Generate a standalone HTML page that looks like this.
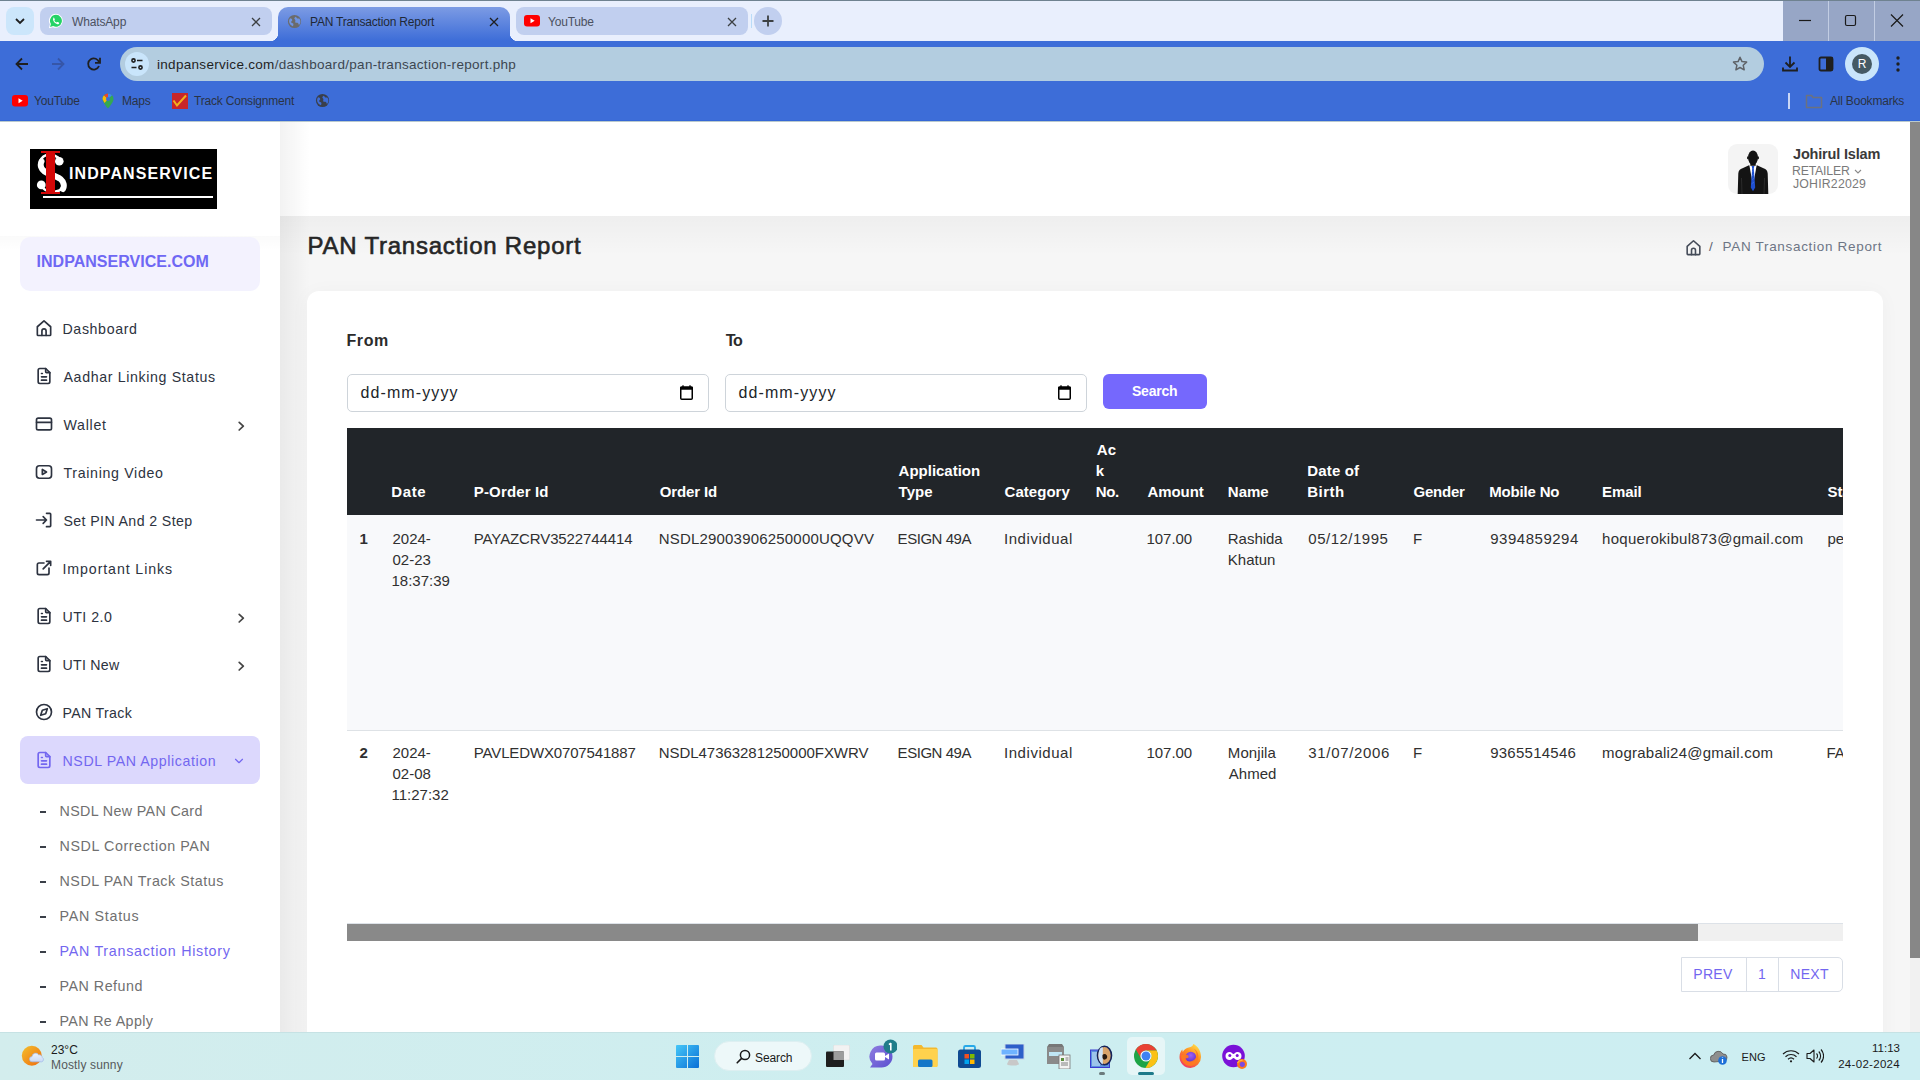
<!DOCTYPE html>
<html><head><meta charset="utf-8">
<style>
*{margin:0;padding:0;box-sizing:border-box}
html,body{width:1920px;height:1080px;overflow:hidden;background:#fff;font-family:"Liberation Sans",sans-serif}
.a{position:absolute}
.t{position:absolute;white-space:nowrap;line-height:1}
</style></head><body>
<!-- CHROME -->
<div class="a" style="left:0;top:0;width:1920px;height:41px;background:#e9effd"></div>
<div class="a" style="left:0;top:0;width:1920px;height:1px;background:#6f8290"></div>
<div class="a" style="left:1783px;top:1px;width:137px;height:40px;background:#97a6c6"></div>
<div class="a" style="left:1828px;top:1px;width:1px;height:40px;background:#c2cde3"></div>
<div class="a" style="left:1874px;top:1px;width:1px;height:40px;background:#c2cde3"></div>
<svg class="a" style="left:1783px;top:1px" width="137" height="40"><g stroke="#1a1a1a" stroke-width="1.2" fill="none"><path d="M16 19.5h12"/><rect x="62.5" y="14.5" width="10" height="10" rx="1.5"/><path d="M108 13.5l12 12M120 13.5l-12 12"/></g></svg>
<!-- tab dropdown -->
<div class="a" style="left:6px;top:7px;width:28px;height:28px;border-radius:8px;background:#cce6fb"></div>
<svg class="a" style="left:6px;top:7px" width="28" height="28"><path d="M10 12l4 4 4-4" stroke="#1f1f1f" stroke-width="1.8" fill="none"/></svg>
<!-- whatsapp tab -->
<div class="a" style="left:40px;top:7px;width:232px;height:28px;border-radius:8px;background:#c1cfef"></div>
<svg class="a" style="left:48px;top:13px" width="16" height="16" viewBox="0 0 16 16"><path d="M8 .8a7 7 0 0 0-6.1 10.5L.9 15.2l4-1a7 7 0 1 0 3.1-13.4z" fill="#fff"/><path d="M8 1.8a6 6 0 0 0-5.1 9.2l-.8 2.9 3-.8A6 6 0 1 0 8 1.8z" fill="#25d366"/><path d="M5.6 4.6c.3 0 .5.1.6.4l.6 1.3c.1.2 0 .4-.1.6l-.4.5c.4.9 1.2 1.7 2.2 2.2l.5-.5c.2-.2.4-.2.6-.1l1.3.6c.2.1.3.4.3.6-.2.9-.9 1.3-1.8 1.1-2.1-.6-3.6-2.1-4.3-4.2-.2-.9.2-1.9.5-2.5z" fill="#fff"/></svg>
<div class="t" style="left:72px;top:16px;font-size:12px;letter-spacing:-.15px;color:#4b5160">WhatsApp</div>
<svg class="a" style="left:251px;top:16.5px" width="10" height="10"><path d="M1 1l8 8M9 1l-8 8" stroke="#3c4043" stroke-width="1.3"/></svg>
<!-- active tab -->
<div class="a" style="left:278px;top:7px;width:232px;height:34px;border-radius:10px 10px 0 0;background:linear-gradient(#7c9be4,#3d6dd8)"></div>
<div class="a" style="left:270px;top:33px;width:8px;height:8px;background:radial-gradient(circle at 0 0,#e9effd 8px,#3d6dd8 8.5px)"></div>
<div class="a" style="left:510px;top:33px;width:8px;height:8px;background:radial-gradient(circle at 100% 0,#e9effd 8px,#3d6dd8 8.5px)"></div>
<svg class="a" style="left:287px;top:14px" width="15" height="15" viewBox="0 0 16 16"><circle cx="8" cy="8" r="7" fill="#6b6b6b"/><path d="M3.2 4.5c1.5.2 2.6 1 2.4 2.2-.2 1-1.5 1-1.2 2.2.3 1 1.7.6 2.3 1.6.4.8-.2 1.8-.4 2.5A5.6 5.6 0 0 1 3.2 4.5zM9.5 3c.8.5.6 1.5 1.5 1.8 1 .3 1.9-.3 2.5.6a5.6 5.6 0 0 1-.8 6.5c-.3-.9-.2-2-1.2-2.4-.9-.4-2 .3-2.6-.5-.5-.7.2-1.6 0-2.4C8.6 5.600 7.500 5.100 7.900 4.200 8.200 3.500 8.900 3.200 9.500 3z" fill="#6f94e2"/></svg>
<div class="t" style="left:310px;top:16px;font-size:12px;letter-spacing:-.2px;color:#1f2937">PAN Transaction Report</div>
<svg class="a" style="left:489px;top:16.5px" width="10" height="10"><path d="M1 1l8 8M9 1l-8 8" stroke="#1f1f1f" stroke-width="1.3"/></svg>
<!-- youtube tab -->
<div class="a" style="left:516px;top:7px;width:232px;height:28px;border-radius:8px;background:#c1cfef"></div>
<svg class="a" style="left:524px;top:15px" width="16" height="12"><rect x="0" y="0" width="16" height="11.5" rx="3" fill="#ff0000"/><path d="M6.5 3.3v5l4.2-2.5z" fill="#fff"/></svg>
<div class="t" style="left:548px;top:16px;font-size:12px;letter-spacing:-.2px;color:#4b5160">YouTube</div>
<svg class="a" style="left:727px;top:16.5px" width="10" height="10"><path d="M1 1l8 8M9 1l-8 8" stroke="#3c4043" stroke-width="1.3"/></svg>
<div class="a" style="left:751px;top:14px;width:1px;height:14px;background:#b9dcf8"></div>
<div class="a" style="left:754px;top:7px;width:28px;height:28px;border-radius:50%;background:#c1cfef"></div>
<svg class="a" style="left:754px;top:7px" width="28" height="28"><path d="M14 8.5v11M8.5 14h11" stroke="#3c4043" stroke-width="1.8"/></svg>
<!-- toolbar -->
<div class="a" style="left:0;top:41px;width:1920px;height:80px;background:#3d6dd8"></div>
<div class="a" style="left:0;top:120px;width:1920px;height:1px;background:#3467d6"></div>
<svg class="a" style="left:12px;top:54px" width="20" height="20"><path d="M16 10H4.5M10 4.5L4.5 10l5.5 5.5" stroke="#1f1f1f" stroke-width="1.8" fill="none"/></svg>
<svg class="a" style="left:48px;top:54px" width="20" height="20"><path d="M4 10h11.5M10 4.5l5.5 5.5-5.5 5.5" stroke="#3656a8" stroke-width="1.8" fill="none"/></svg>
<svg class="a" style="left:84px;top:54px" width="20" height="20"><path d="M15.2 8.5A5.6 5.6 0 1 0 15 12" stroke="#1f1f1f" stroke-width="1.8" fill="none"/><path d="M16 3.8v5h-5" stroke="#1f1f1f" stroke-width="1.8" fill="none"/></svg>
<div class="a" style="left:120px;top:47px;width:1644px;height:34px;border-radius:17px;background:#b3cde0"></div>
<div class="a" style="left:125px;top:52px;width:24px;height:24px;border-radius:50%;background:#c9e5fb"></div>
<svg class="a" style="left:125px;top:52px" width="24" height="24"><g stroke="#1f1f1f" stroke-width="1.6" fill="none"><circle cx="8.5" cy="8.5" r="1.6"/><path d="M12 8.5h5.5M6.5 15.5h5"/><circle cx="15.5" cy="15.5" r="1.6"/></g></svg>
<div class="t" style="left:157px;top:57.5px;font-size:13.5px;letter-spacing:.3px;color:#1f1f1f">indpanservice.com<span style="color:#3c4650">/dashboard/pan-transaction-report.php</span></div>
<svg class="a" style="left:1731px;top:55px" width="18" height="18" viewBox="0 0 18 18"><path d="M9 2.3l2 4.3 4.6.5-3.4 3.1 1 4.6L9 12.5l-4.1 2.3 1-4.6-3.4-3.1 4.6-.5z" stroke="#5f6368" stroke-width="1.5" fill="none" stroke-linejoin="round"/></svg>
<svg class="a" style="left:1780px;top:54px" width="20" height="20"><path d="M10 2.5v10M5.5 8.5l4.5 4.5 4.5-4.5M3 13.5v3h14v-3" stroke="#1f1f1f" stroke-width="1.8" fill="none"/></svg>
<svg class="a" style="left:1817px;top:55px" width="18" height="18"><rect x="2.5" y="2.5" width="13" height="13" rx="1.5" stroke="#1f1f1f" stroke-width="1.8" fill="none"/><rect x="9" y="2.5" width="6.5" height="13" fill="#1f1f1f"/></svg>
<div class="a" style="left:1845px;top:47px;width:34px;height:34px;border-radius:50%;background:#c9e5fb"></div>
<div class="a" style="left:1852px;top:54px;width:20px;height:20px;border-radius:50%;background:#455a64"></div>
<div class="t" style="left:1852px;top:58px;width:20px;text-align:center;font-size:12px;color:#fff">R</div>
<svg class="a" style="left:1892px;top:55px" width="12" height="18"><g fill="#1f1f1f"><circle cx="6" cy="3" r="1.7"/><circle cx="6" cy="9" r="1.7"/><circle cx="6" cy="15" r="1.7"/></g></svg>
<!-- bookmarks -->
<svg class="a" style="left:12px;top:95px" width="17" height="12"><rect x="0" y="0" width="16" height="11.5" rx="3" fill="#ff0000"/><path d="M6.5 3.3v5l4.2-2.5z" fill="#fff"/></svg>
<div class="t" style="left:34px;top:95px;font-size:12px;letter-spacing:-.2px;color:#2a3345">YouTube</div>
<svg class="a" style="left:102px;top:93px" width="12" height="16" viewBox="0 0 12 16"><path d="M6 0.5a5.5 5.5 0 0 0-5.5 5.5c0 3.5 5.5 9.5 5.5 9.5s5.5-6 5.5-9.5A5.5 5.5 0 0 0 6 .5z" fill="#34a853"/><path d="M.5 6A5.500 5.500 0 0 1 2 2.200L6 6 2.500 10z" fill="#fbbc04"/><path d="M2 2.2A5.5 5.5 0 0 1 6 .5L6 6z" fill="#ea4335"/><path d="M6 .5a5.5 5.5 0 0 1 4 1.7L6 6z" fill="#4285f4"/><circle cx="6" cy="6" r="2" fill="#3d6dd8"/></svg>
<div class="t" style="left:122px;top:95px;font-size:12px;letter-spacing:-.2px;color:#2a3345">Maps</div>
<div class="a" style="left:172px;top:93px;width:16px;height:16px;background:#c8262a"></div>
<svg class="a" style="left:172px;top:93px" width="16" height="16"><path d="M1.5 7.5l3.5 5 9-10" stroke="#f2b21b" stroke-width="2" fill="none"/></svg>
<div class="t" style="left:194px;top:95px;font-size:12px;letter-spacing:-.2px;color:#2a3345">Track Consignment</div>
<svg class="a" style="left:315px;top:93px" width="15" height="15" viewBox="0 0 16 16"><circle cx="8" cy="8" r="7" fill="#3a3f4a"/><path d="M3.2 4.5c1.5.2 2.6 1 2.4 2.2-.2 1-1.5 1-1.2 2.2.3 1 1.7.6 2.3 1.6.4.8-.2 1.8-.4 2.5A5.6 5.6 0 0 1 3.2 4.5zM9.5 3c.8.5.6 1.5 1.5 1.8 1 .3 1.9-.3 2.5.6a5.6 5.6 0 0 1-.8 6.5c-.3-.9-.2-2-1.2-2.4-.9-.4-2 .3-2.6-.5-.5-.7.2-1.6 0-2.4C8.6 5.600 7.500 5.100 7.900 4.200 8.200 3.500 8.900 3.200 9.500 3z" fill="#3d6dd8"/></svg>
<div class="a" style="left:1788px;top:93px;width:2px;height:16px;background:#c9d6f5"></div>
<svg class="a" style="left:1805px;top:94px" width="18" height="15"><path d="M1.5 1.5h5l1.5 2h8.5v10h-15z" stroke="#6b7280" stroke-width="1.5" fill="none" stroke-linejoin="round"/></svg>
<div class="t" style="left:1830px;top:95px;font-size:12px;letter-spacing:-.2px;color:#2a3345">All Bookmarks</div>
<div class="a" style="left:280px;top:121px;width:1630px;height:911px;background:#f6f6f6"></div>
<div class="a" style="left:280px;top:121px;width:1630px;height:95px;background:#fff"></div>
<div class="a" style="left:280px;top:216px;width:1630px;height:40px;background:linear-gradient(rgba(0,0,0,.03),rgba(0,0,0,0))"></div>
<div class="a" style="left:280px;top:121px;width:30px;height:911px;background:linear-gradient(90deg,rgba(0,0,0,.05),rgba(0,0,0,0))"></div>
<div class="a" style="left:0;top:121px;width:280px;height:911px;background:#fff"></div>
<div class="a" style="left:0;top:236px;width:280px;height:14px;background:linear-gradient(rgba(0,0,0,.02),rgba(0,0,0,0))"></div>
<div class="a" style="left:30px;top:149px;width:187px;height:60px;background:#000"></div>
<div class="a" style="left:43px;top:196px;width:170px;height:2px;background:#fff"></div>
<svg class="a" style="left:36px;top:153px" width="31" height="40" viewBox="0 0 31 40"><g fill="none" stroke="#fff" stroke-linecap="round"><path d="M22 4.500C18 1.200 11 1 7.500 3.500 3.500 6.500 3.200 11 5 14.500 8 19.500 19 21 24 25 28.500 29 28 35 22.500 37.800 17 40 10 38.500 7.500 35.500" stroke-width="2.600"/><path d="M5.500 8.500C3.800 12 5 16 8.500 18.500 13 21.500 20 22.500 24.500 26 28 29 28.500 33 27 36" stroke-width="6"/></g><circle cx="23.300" cy="8.300" r="4.300" fill="#fff"/><circle cx="5.300" cy="31.900" r="4.400" fill="#fff"/></svg>
<div class="a" style="left:46px;top:153px;width:9px;height:40px;background:#d40808"></div>
<div class="a" style="left:41px;top:151px;width:19px;height:2px;background:#d40808"></div>
<div class="a" style="left:41px;top:192px;width:19px;height:2px;background:#d40808"></div>
<div class="a" style="left:20px;top:237px;width:240px;height:54px;border-radius:10px;background:#f3f2fe"></div>
<svg class="a" style="left:33.5px;top:318px" width="20" height="20" viewBox="0 0 24 24" fill="none" stroke="#2d3340" stroke-width="2" stroke-linecap="round" stroke-linejoin="round"><path d="M4 10.5L12 3.5l8 7V20a1 1 0 0 1-1 1H5a1 1 0 0 1-1-1z"/><path d="M9.5 21v-5.5a2.5 2.5 0 0 1 5 0V21"/></svg>
<svg class="a" style="left:33.5px;top:366px" width="20" height="20" viewBox="0 0 24 24" fill="none" stroke="#2d3340" stroke-width="2" stroke-linecap="round" stroke-linejoin="round"><path d="M14 3v4a1 1 0 0 0 1 1h4"/><path d="M17 21H7a2 2 0 0 1-2-2V5a2 2 0 0 1 2-2h7l5 5v11a2 2 0 0 1-2 2z"/><path d="M9 9h1M9 13h6M9 17h6"/></svg>
<svg class="a" style="left:33.5px;top:414px" width="20" height="20" viewBox="0 0 24 24" fill="none" stroke="#2d3340" stroke-width="2" stroke-linecap="round" stroke-linejoin="round"><rect x="3" y="5" width="18" height="14" rx="2"/><path d="M3 10h18"/></svg>
<svg class="a" style="left:236px;top:420.5px" width="10" height="10" viewBox="0 0 10 10" fill="none" stroke="#454545" stroke-width="1.7" stroke-linecap="round" stroke-linejoin="round"><path d="M3.200 1.300L7.300 5.200 3.200 9"/></svg>
<svg class="a" style="left:33.5px;top:462px" width="20" height="20" viewBox="0 0 24 24" fill="none" stroke="#2d3340" stroke-width="2" stroke-linecap="round" stroke-linejoin="round"><rect x="3" y="4.5" width="18" height="15" rx="3.5"/><path d="M10 9v6l5-3z"/></svg>
<svg class="a" style="left:33.5px;top:510px" width="20" height="20" viewBox="0 0 24 24" fill="none" stroke="#2d3340" stroke-width="2" stroke-linecap="round" stroke-linejoin="round"><path d="M3 12h12M11 8l4 4-4 4"/><path d="M15 4h4a1 1 0 0 1 1 1v14a1 1 0 0 1-1 1h-4"/></svg>
<svg class="a" style="left:33.5px;top:558px" width="20" height="20" viewBox="0 0 24 24" fill="none" stroke="#2d3340" stroke-width="2" stroke-linecap="round" stroke-linejoin="round"><path d="M12 6H6a2 2 0 0 0-2 2v10a2 2 0 0 0 2 2h10a2 2 0 0 0 2-2v-6"/><path d="M11 13l9-9M15 4h5v5"/></svg>
<svg class="a" style="left:33.5px;top:606px" width="20" height="20" viewBox="0 0 24 24" fill="none" stroke="#2d3340" stroke-width="2" stroke-linecap="round" stroke-linejoin="round"><path d="M14 3v4a1 1 0 0 0 1 1h4"/><path d="M17 21H7a2 2 0 0 1-2-2V5a2 2 0 0 1 2-2h7l5 5v11a2 2 0 0 1-2 2z"/><path d="M9 9h1M9 13h6M9 17h6"/></svg>
<svg class="a" style="left:236px;top:612.5px" width="10" height="10" viewBox="0 0 10 10" fill="none" stroke="#454545" stroke-width="1.7" stroke-linecap="round" stroke-linejoin="round"><path d="M3.200 1.300L7.300 5.200 3.200 9"/></svg>
<svg class="a" style="left:33.5px;top:654px" width="20" height="20" viewBox="0 0 24 24" fill="none" stroke="#2d3340" stroke-width="2" stroke-linecap="round" stroke-linejoin="round"><path d="M14 3v4a1 1 0 0 0 1 1h4"/><path d="M17 21H7a2 2 0 0 1-2-2V5a2 2 0 0 1 2-2h7l5 5v11a2 2 0 0 1-2 2z"/><path d="M9 9h1M9 13h6M9 17h6"/></svg>
<svg class="a" style="left:236px;top:660.5px" width="10" height="10" viewBox="0 0 10 10" fill="none" stroke="#454545" stroke-width="1.7" stroke-linecap="round" stroke-linejoin="round"><path d="M3.200 1.300L7.300 5.200 3.200 9"/></svg>
<svg class="a" style="left:33.5px;top:702px" width="20" height="20" viewBox="0 0 24 24" fill="none" stroke="#2d3340" stroke-width="2" stroke-linecap="round" stroke-linejoin="round"><circle cx="12" cy="12" r="9"/><path d="M8 16l2-6 6-2-2 6z"/></svg>
<div class="a" style="left:20px;top:736px;width:240px;height:48px;border-radius:8px;background:#dcd8fd"></div>
<svg class="a" style="left:33.5px;top:750px" width="20" height="20" viewBox="0 0 24 24" fill="none" stroke="#7367f0" stroke-width="2" stroke-linecap="round" stroke-linejoin="round"><path d="M14 3v4a1 1 0 0 0 1 1h4"/><path d="M17 21H7a2 2 0 0 1-2-2V5a2 2 0 0 1 2-2h7l5 5v11a2 2 0 0 1-2 2z"/><path d="M9 9h1M9 13h6M9 17h6"/></svg>
<svg class="a" style="left:232px;top:754px" width="14" height="14" viewBox="0 0 24 24" fill="none" stroke="#7367f0" stroke-width="2" stroke-linecap="round" stroke-linejoin="round"><path d="M6 9l6 6 6-6"/></svg>
<div class="a" style="left:40px;top:811px;width:6px;height:2px;background:#3a3f48"></div>
<div class="a" style="left:40px;top:846px;width:6px;height:2px;background:#3a3f48"></div>
<div class="a" style="left:40px;top:881px;width:6px;height:2px;background:#3a3f48"></div>
<div class="a" style="left:40px;top:916px;width:6px;height:2px;background:#3a3f48"></div>
<div class="a" style="left:40px;top:951px;width:6px;height:2px;background:#3a3f48"></div>
<div class="a" style="left:40px;top:986px;width:6px;height:2px;background:#3a3f48"></div>
<div class="a" style="left:40px;top:1021px;width:6px;height:2px;background:#3a3f48"></div>
<div class="a" style="left:1728px;top:144px;width:50px;height:50px;border-radius:9px;background:#f4f4f4"></div>
<svg class="a" style="left:1728px;top:144px" width="50" height="50" viewBox="0 0 50 50">
<path d="M9.700 50L10.300 29.500C10.500 26.500 12 25.200 14.500 24.300L21 21.200H29L35.500 24.300C38 25.200 39.500 26.500 39.700 29.500L40.300 50z" fill="#141414"/>
<path d="M13.500 34L14 50M36.500 34L36 50" stroke="#3a3a3a" stroke-width=".6"/>
<path d="M21.300 20.800h7.400L25 42z" fill="#fff"/>
<path d="M23.600 22h2.800l-.6 2.300 1.400 19.200L25 47.300 22.800 43.500l1.400-19.200z" fill="#1f4fd0"/>
<path d="M24 28l2-1.500M23.800 32l2.300-1.700M23.600 36l2.600-1.900M23.400 40l2.800-2" stroke="#4a7ae8" stroke-width=".5"/>
<path d="M22.300 17.500h5.400v4.300h-5.400z" fill="#141414"/>
<ellipse cx="25" cy="13.600" rx="5" ry="7.200" fill="#141414"/>
<ellipse cx="19.900" cy="13.800" rx=".9" ry="1.500" fill="#141414"/><ellipse cx="30.100" cy="13.800" rx=".9" ry="1.500" fill="#141414"/>
</svg>
<svg class="a" style="left:1854px;top:169px" width="8" height="6"><path d="M1 1l3 3 3-3" stroke="#8a8a8a" stroke-width="1.1" fill="none"/></svg>
<svg class="a" style="left:1683.5px;top:237.5px" width="19" height="19" viewBox="0 0 24 24" fill="none" stroke="#454c59" stroke-width="2" stroke-linecap="round" stroke-linejoin="round"><path d="M4 10.5L12 3.5l8 7V20a1 1 0 0 1-1 1H5a1 1 0 0 1-1-1z"/><path d="M9.5 21v-5.5a2.5 2.5 0 0 1 5 0V21"/></svg>
<div class="a" style="left:307px;top:291px;width:1576px;height:760px;border-radius:12px;background:#fff;box-shadow:0 2px 20px rgba(0,0,0,.035)"></div>
<div class="a" style="left:347px;top:374px;width:362px;height:38px;border:1px solid #ced4da;border-radius:5px;background:#fff"></div>
<svg class="a" style="left:679.5px;top:385px" width="13" height="15"><rect x=".75" y="2.25" width="11.5" height="12" rx="1" fill="none" stroke="#000" stroke-width="1.5"/><rect x="0" y="1.5" width="13" height="3.3" rx="1" fill="#000"/><path d="M3 .3v2.500M10 .3v2.500" stroke="#000" stroke-width="1.300"/></svg>
<div class="a" style="left:725px;top:374px;width:362px;height:38px;border:1px solid #ced4da;border-radius:5px;background:#fff"></div>
<svg class="a" style="left:1057.5px;top:385px" width="13" height="15"><rect x=".75" y="2.25" width="11.5" height="12" rx="1" fill="none" stroke="#000" stroke-width="1.5"/><rect x="0" y="1.5" width="13" height="3.3" rx="1" fill="#000"/><path d="M3 .3v2.500M10 .3v2.500" stroke="#000" stroke-width="1.300"/></svg>
<div class="a" style="left:1103px;top:374px;width:104px;height:35px;border-radius:6px;background:#7568fd"></div>
<div class="a" style="left:347px;top:428px;width:1496px;height:87px;background:#212529"></div>
<div class="a" style="left:347px;top:515px;width:1496px;height:215px;background:#f8f9fb"></div>
<div class="a" style="left:347px;top:730px;width:1496px;height:1px;background:#dee2e6"></div>
<div class="a" style="left:347px;top:923px;width:1496px;height:18px;background:#f0f0f0;border-top:1px solid #dde2e8"></div>
<div class="a" style="left:347px;top:924px;width:1351px;height:17px;background:#898989"></div>
<div class="a" style="left:1681px;top:957px;width:162px;height:35px;border:1px solid #d9dee6;border-radius:0 5px 5px 0;background:#fff"></div>
<div class="a" style="left:1746px;top:957px;width:1px;height:35px;background:#d9dee6"></div>
<div class="a" style="left:1778px;top:957px;width:1px;height:35px;background:#d9dee6"></div>
<div class="a" style="left:1910px;top:121px;width:10px;height:911px;background:#f1f1f1"></div>
<div class="a" style="left:1910px;top:122px;width:10px;height:836px;background:#878787"></div>
<div class="a" style="left:0;top:121px;width:1920px;height:1px;background:#b9c9cd"></div>
<div class="t" style="left:69.00px;top:166.00px;font-size:16px;color:#fff;font-weight:700;letter-spacing:1.089px;">INDPANSERVICE</div>
<div class="t" style="left:36.50px;top:254.00px;font-size:16px;color:#6f68f4;font-weight:700;letter-spacing:0.028px;">INDPANSERVICE.COM</div>
<div class="t" style="left:62.50px;top:322.00px;font-size:14.2px;color:#2d3340;letter-spacing:0.623px;">Dashboard</div>
<div class="t" style="left:63.50px;top:370.00px;font-size:14.2px;color:#2d3340;letter-spacing:0.639px;">Aadhar Linking Status</div>
<div class="t" style="left:63.50px;top:418.00px;font-size:14.2px;color:#2d3340;letter-spacing:0.710px;">Wallet</div>
<div class="t" style="left:63.50px;top:466.00px;font-size:14.2px;color:#2d3340;letter-spacing:0.668px;">Training Video</div>
<div class="t" style="left:63.50px;top:514.00px;font-size:14.2px;color:#2d3340;letter-spacing:0.374px;">Set PIN And 2 Step</div>
<div class="t" style="left:62.50px;top:562.00px;font-size:14.2px;color:#2d3340;letter-spacing:0.900px;">Important Links</div>
<div class="t" style="left:62.50px;top:610.00px;font-size:14.2px;color:#2d3340;letter-spacing:0.479px;">UTI 2.0</div>
<div class="t" style="left:62.50px;top:658.00px;font-size:14.2px;color:#2d3340;letter-spacing:0.261px;">UTI New</div>
<div class="t" style="left:62.50px;top:706.00px;font-size:14.2px;color:#2d3340;letter-spacing:0.324px;">PAN Track</div>
<div class="t" style="left:62.50px;top:754.00px;font-size:14.2px;color:#7367f0;letter-spacing:0.586px;">NSDL PAN Application</div>
<div class="t" style="left:59.50px;top:804.00px;font-size:14.3px;color:#707070;letter-spacing:0.342px;">NSDL New PAN Card</div>
<div class="t" style="left:59.50px;top:839.00px;font-size:14.3px;color:#707070;letter-spacing:0.581px;">NSDL Correction PAN</div>
<div class="t" style="left:59.50px;top:874.00px;font-size:14.3px;color:#707070;letter-spacing:0.526px;">NSDL PAN Track Status</div>
<div class="t" style="left:59.50px;top:909.00px;font-size:14.3px;color:#707070;letter-spacing:0.701px;">PAN Status</div>
<div class="t" style="left:59.50px;top:944.00px;font-size:14.3px;color:#7367f0;letter-spacing:0.715px;">PAN Transaction History</div>
<div class="t" style="left:59.50px;top:979.00px;font-size:14.3px;color:#707070;letter-spacing:0.505px;">PAN Refund</div>
<div class="t" style="left:59.50px;top:1014.00px;font-size:14.3px;color:#707070;letter-spacing:0.348px;">PAN Re Apply</div>
<div class="t" style="left:1793.00px;top:147.00px;font-size:14.5px;color:#3a3a3a;font-weight:700;letter-spacing:-0.171px;">Johirul Islam</div>
<div class="t" style="left:1792.00px;top:165.00px;font-size:12.3px;color:#7a7a7a;letter-spacing:-0.191px;">RETAILER</div>
<div class="t" style="left:1793.00px;top:178.00px;font-size:12.3px;color:#7a7a7a;letter-spacing:0.195px;">JOHIR22029</div>
<div class="t" style="left:307.50px;top:234.00px;font-size:24px;color:#262626;letter-spacing:0.773px;-webkit-text-stroke:.6px #262626">PAN Transaction Report</div>
<div class="t" style="left:1709.00px;top:240.00px;font-size:13.5px;color:#5d6372;">/</div>
<div class="t" style="left:1722.50px;top:240.00px;font-size:13.5px;color:#6d7585;letter-spacing:0.688px;">PAN Transaction Report</div>
<div class="t" style="left:346.50px;top:333.00px;font-size:16px;color:#2b2b2b;font-weight:700;letter-spacing:0.576px;">From</div>
<div class="t" style="left:725.70px;top:333.00px;font-size:16px;color:#2b2b2b;font-weight:700;letter-spacing:-1.286px;">To</div>
<div class="t" style="left:360.50px;top:385.00px;font-size:16px;color:#212529;letter-spacing:1.099px;">dd-mm-yyyy</div>
<div class="t" style="left:738.50px;top:385.00px;font-size:16px;color:#212529;letter-spacing:1.099px;">dd-mm-yyyy</div>
<div class="t" style="left:1132.00px;top:384.00px;font-size:14px;color:#fff;font-weight:700;letter-spacing:-0.229px;">Search</div>
<div class="t" style="left:391.30px;top:484.00px;font-size:15px;color:#ffffff;font-weight:700;letter-spacing:0.610px;">Date</div>
<div class="t" style="left:473.80px;top:484.00px;font-size:15px;color:#ffffff;font-weight:700;letter-spacing:0.146px;">P-Order Id</div>
<div class="t" style="left:659.70px;top:484.00px;font-size:15px;color:#ffffff;font-weight:700;letter-spacing:-0.126px;">Order Id</div>
<div class="t" style="left:898.60px;top:463.00px;font-size:15px;color:#ffffff;font-weight:700;letter-spacing:-0.010px;">Application</div>
<div class="t" style="left:898.60px;top:484.00px;font-size:15px;color:#ffffff;font-weight:700;">Type</div>
<div class="t" style="left:1004.50px;top:484.00px;font-size:15px;color:#ffffff;font-weight:700;letter-spacing:0.046px;">Category</div>
<div class="t" style="left:1096.80px;top:442.00px;font-size:15px;color:#ffffff;font-weight:700;">Ac</div>
<div class="t" style="left:1095.80px;top:463.00px;font-size:15px;color:#ffffff;font-weight:700;">k</div>
<div class="t" style="left:1095.80px;top:484.00px;font-size:15px;color:#ffffff;font-weight:700;letter-spacing:-0.398px;">No.</div>
<div class="t" style="left:1147.50px;top:484.00px;font-size:15px;color:#ffffff;font-weight:700;letter-spacing:-0.072px;">Amount</div>
<div class="t" style="left:1227.80px;top:484.00px;font-size:15px;color:#ffffff;font-weight:700;">Name</div>
<div class="t" style="left:1307.30px;top:463.00px;font-size:15px;color:#ffffff;font-weight:700;letter-spacing:0.143px;">Date of</div>
<div class="t" style="left:1307.30px;top:484.00px;font-size:15px;color:#ffffff;font-weight:700;letter-spacing:0.467px;">Birth</div>
<div class="t" style="left:1413.60px;top:484.00px;font-size:15px;color:#ffffff;font-weight:700;letter-spacing:-0.255px;">Gender</div>
<div class="t" style="left:1489.20px;top:484.00px;font-size:15px;color:#ffffff;font-weight:700;letter-spacing:-0.175px;">Mobile No</div>
<div class="t" style="left:1602.10px;top:484.00px;font-size:15px;color:#ffffff;font-weight:700;letter-spacing:-0.088px;">Email</div>
<div class="a" style="left:0;top:0;width:1843px;height:1080px;overflow:hidden"><div class="t" style="left:1827.40px;top:484.00px;font-size:15px;color:#ffffff;font-weight:700;">Status</div></div>
<div class="t" style="left:359.50px;top:531.00px;font-size:15px;color:#303030;font-weight:700;">1</div>
<div class="t" style="left:392.50px;top:531.00px;font-size:15px;color:#303030;">2024-</div>
<div class="t" style="left:392.50px;top:552.00px;font-size:15px;color:#303030;">02-23</div>
<div class="t" style="left:391.50px;top:573.00px;font-size:15px;color:#303030;">18:37:39</div>
<div class="t" style="left:473.80px;top:531.00px;font-size:15px;color:#303030;letter-spacing:-0.113px;">PAYAZCRV3522744414</div>
<div class="t" style="left:658.70px;top:531.00px;font-size:15px;color:#303030;letter-spacing:0.192px;">NSDL29003906250000UQQVV</div>
<div class="t" style="left:897.60px;top:531.00px;font-size:15px;color:#303030;letter-spacing:-0.454px;">ESIGN 49A</div>
<div class="t" style="left:1004.00px;top:531.00px;font-size:15px;color:#303030;letter-spacing:0.551px;">Individual</div>
<div class="t" style="left:1146.50px;top:531.00px;font-size:15px;color:#303030;letter-spacing:-0.047px;">107.00</div>
<div class="t" style="left:1227.80px;top:531.00px;font-size:15px;color:#303030;letter-spacing:-0.032px;">Rashida</div>
<div class="t" style="left:1227.80px;top:552.00px;font-size:15px;color:#303030;">Khatun</div>
<div class="t" style="left:1308.30px;top:531.00px;font-size:15px;color:#303030;letter-spacing:0.497px;">05/12/1995</div>
<div class="t" style="left:1413.00px;top:531.00px;font-size:15px;color:#303030;">F</div>
<div class="t" style="left:1490.20px;top:531.00px;font-size:15px;color:#303030;letter-spacing:0.524px;">9394859294</div>
<div class="t" style="left:1602.10px;top:531.00px;font-size:15px;color:#303030;letter-spacing:0.279px;">hoquerokibul873@gmail.com</div>
<div class="a" style="left:0;top:0;width:1843px;height:1080px;overflow:hidden"><div class="t" style="left:1827.40px;top:531.00px;font-size:15px;color:#303030;">pending</div></div>
<div class="t" style="left:359.50px;top:745.00px;font-size:15px;color:#303030;font-weight:700;">2</div>
<div class="t" style="left:392.50px;top:745.00px;font-size:15px;color:#303030;">2024-</div>
<div class="t" style="left:392.50px;top:766.00px;font-size:15px;color:#303030;">02-08</div>
<div class="t" style="left:391.50px;top:787.00px;font-size:15px;color:#303030;">11:27:32</div>
<div class="t" style="left:473.80px;top:745.00px;font-size:15px;color:#303030;letter-spacing:-0.148px;">PAVLEDWX0707541887</div>
<div class="t" style="left:658.70px;top:745.00px;font-size:15px;color:#303030;letter-spacing:-0.040px;">NSDL47363281250000FXWRV</div>
<div class="t" style="left:897.60px;top:745.00px;font-size:15px;color:#303030;letter-spacing:-0.454px;">ESIGN 49A</div>
<div class="t" style="left:1004.00px;top:745.00px;font-size:15px;color:#303030;letter-spacing:0.551px;">Individual</div>
<div class="t" style="left:1146.50px;top:745.00px;font-size:15px;color:#303030;letter-spacing:-0.047px;">107.00</div>
<div class="t" style="left:1227.80px;top:745.00px;font-size:15px;color:#303030;letter-spacing:0.087px;">Monjila</div>
<div class="t" style="left:1228.80px;top:766.00px;font-size:15px;color:#303030;">Ahmed</div>
<div class="t" style="left:1308.30px;top:745.00px;font-size:15px;color:#303030;letter-spacing:0.663px;">31/07/2006</div>
<div class="t" style="left:1413.00px;top:745.00px;font-size:15px;color:#303030;">F</div>
<div class="t" style="left:1490.20px;top:745.00px;font-size:15px;color:#303030;letter-spacing:0.247px;">9365514546</div>
<div class="t" style="left:1602.10px;top:745.00px;font-size:15px;color:#303030;letter-spacing:0.238px;">mograbali24@gmail.com</div>
<div class="a" style="left:0;top:0;width:1843px;height:1080px;overflow:hidden"><div class="t" style="left:1826.40px;top:745.00px;font-size:15px;color:#303030;">FAILED</div></div>
<div class="t" style="left:1693.30px;top:967.00px;font-size:14px;color:#7367f0;letter-spacing:0.305px;">PREV</div>
<div class="t" style="left:1758.00px;top:967.00px;font-size:14px;color:#7367f0;">1</div>
<div class="t" style="left:1790.20px;top:967.00px;font-size:14px;color:#7367f0;letter-spacing:0.338px;">NEXT</div><!-- TASKBAR -->
<div class="a" style="left:0;top:1032px;width:1920px;height:48px;background:linear-gradient(90deg,#d3eded,#cdeef0 50%,#cdeef2)"></div>
<div class="a" style="left:0;top:1032px;width:1920px;height:1px;background:#c6e2e4"></div>
<svg class="a" style="left:21px;top:1045px" width="24" height="22" viewBox="0 0 24 22"><defs><linearGradient id="sg" x1="0" y1="0" x2="1" y2="1"><stop offset="0" stop-color="#f3c02e"/><stop offset="1" stop-color="#f06a0c"/></linearGradient><linearGradient id="cg" x1="0" y1="0" x2="0" y2="1"><stop offset="0" stop-color="#eef3fc"/><stop offset="1" stop-color="#c9d9f5"/></linearGradient></defs><circle cx="10.800" cy="10.800" r="10" fill="url(#sg)"/><path d="M11.200 16.800a2.600 2.600 0 0 1-.2-5.200 3.600 3.600 0 0 1 6.700-1.700 2.900 2.900 0 0 1 3.600 2.700 2.300 2.300 0 0 1-.5 4.200z" fill="url(#cg)" stroke="#9fb9ea" stroke-width=".7"/></svg>
<div class="t" style="left:51px;top:1044px;font-size:12px;color:#1a1a1a">23°C</div>
<div class="t" style="left:51px;top:1059px;font-size:12px;color:#55595b;letter-spacing:.15px">Mostly sunny</div>
<!-- start -->
<svg class="a" style="left:676px;top:1045px" width="23" height="23" viewBox="0 0 23 23"><defs><linearGradient id="wg" x1="0" y1="0" x2="1" y2="1"><stop offset="0" stop-color="#45c7f8"/><stop offset="1" stop-color="#0a6fd6"/></linearGradient></defs><path d="M0 1a1 1 0 0 1 1-1h10v11H0zM12 0h10a1 1 0 0 1 1 1v10H12zM0 12h11v11H1a1 1 0 0 1-1-1zM12 12h11v10a1 1 0 0 1-1 1H12z" fill="url(#wg)"/></svg>
<div class="a" style="left:714px;top:1041px;width:98px;height:30px;border-radius:15px;background:#edf8f9;border:1px solid #ddeff1"></div>
<svg class="a" style="left:736px;top:1049px" width="15" height="15" viewBox="0 0 15 15"><circle cx="9" cy="6" r="4.600" fill="none" stroke="#1a1a1a" stroke-width="1.500"/><path d="M5.600 9.400L1.200 13.800" stroke="#1a1a1a" stroke-width="1.600" stroke-linecap="round"/></svg>
<div class="t" style="left:755px;top:1052px;font-size:12px;color:#1a1a1a;letter-spacing:-.1px">Search</div>
<!-- task view -->
<svg class="a" style="left:826px;top:1045px" width="24" height="22" viewBox="0 0 24 22"><rect x="7.500" y="0" width="16" height="15" rx="1" fill="#f2f2f2" stroke="#dedede" stroke-width=".6"/><rect x="0" y="6.500" width="18" height="15.500" rx="1" fill="#1e1e1e"/><rect x="7.500" y="6.500" width="10.500" height="8.500" fill="#9c9c9c"/></svg>
<!-- teams -->
<svg class="a" style="left:869px;top:1039px" width="28" height="30" viewBox="0 0 28 30"><defs><linearGradient id="tg" x1="0" y1="0" x2="1" y2="1"><stop offset="0" stop-color="#8f7de0"/><stop offset="1" stop-color="#5b4fd0"/></linearGradient></defs><path d="M12.500 6.500a11 11 0 0 1 0 22H1l2.500-3.500A11 11 0 0 1 12.500 6.500z" fill="url(#tg)"/><rect x="6" y="13.500" width="10" height="8" rx="1.500" fill="#fff"/><path d="M16 17l4-2.500v6L16 18z" fill="#fff"/><circle cx="21.500" cy="7.500" r="7" fill="#1f7d8a"/><path d="M21.800 4v7.500M20 5.600l1.900-1.500" stroke="#fff" stroke-width="1.600"/></svg>
<!-- explorer -->
<svg class="a" style="left:913px;top:1045px" width="25" height="22" viewBox="0 0 25 22"><path d="M0 1.500A1.500 1.500 0 0 1 1.500 0h7l2 2.500H23a1.500 1.500 0 0 1 1.500 1.500v16.500a1.500 1.500 0 0 1-1.500 1.500H1.500A1.500 1.500 0 0 1 0 20.500z" fill="#f4b92e"/><rect x="0" y="4" width="24.500" height="18" rx="1.200" fill="#ffd24d"/><rect x="5" y="14.500" width="14.500" height="7.500" rx="1.500" fill="#1477c8"/></svg>
<!-- store -->
<svg class="a" style="left:957px;top:1044px" width="25" height="25" viewBox="0 0 25 25"><path d="M7 6V3.500a1.500 1.500 0 0 1 1.500-1.500h8A1.500 1.500 0 0 1 18 3.500V6" stroke="#27a8e8" stroke-width="1.800" fill="none"/><rect x="1" y="5.500" width="23" height="18.500" rx="2.500" fill="#0f4a92"/><rect x="7.500" y="10" width="4.500" height="4.500" fill="#f25022"/><rect x="13" y="10" width="4.500" height="4.500" fill="#7fba00"/><rect x="7.500" y="15.500" width="4.500" height="4.500" fill="#00a4ef"/><rect x="13" y="15.500" width="4.500" height="4.500" fill="#ffb900"/></svg>
<!-- misc apps -->
<svg class="a" style="left:1001px;top:1044px" width="25" height="24" viewBox="0 0 25 24"><rect x="4" y="0" width="19" height="15" fill="#2d5fc9" stroke="#c8d3e6" stroke-width="1"/><rect x="0" y="5" width="17" height="6" fill="#6fb3ff" stroke="#fff" stroke-width=".8"/><path d="M8 16h8l2 4c0 2-12 2-12 0z" fill="#c8c8c8"/></svg>
<svg class="a" style="left:1046px;top:1044px" width="25" height="25" viewBox="0 0 25 25"><path d="M1 3h17l-2-3H3z" fill="#777"/><rect x="1" y="3" width="17" height="17" fill="#8a8a8a"/><rect x="3" y="8" width="13" height="4" fill="#bfe6f5"/><rect x="13" y="11" width="11" height="14" fill="#f2f2f2" stroke="#777" stroke-width=".8"/><path d="M15 14h3v3h-3z" fill="#5a8d3a"/><path d="M19.500 14h3M19.500 16h3M15 19h7M15 21h7" stroke="#666" stroke-width=".8"/></svg>
<svg class="a" style="left:1090px;top:1043px" width="25" height="26" viewBox="0 0 25 26"><rect x="0.500" y="7" width="19" height="17.500" fill="#5b8ee0" stroke="#3a3ad0" stroke-width="1"/><rect x="2" y="9" width="8" height="14" fill="#9cc4ea"/><ellipse cx="14.500" cy="12.500" rx="7" ry="9.300" fill="#d9a36a" stroke="#16245a" stroke-width="1.600"/><path d="M10 5.500C8.500 8 8 12 8.800 16c.8 3 2.500 4.800 4 5.600V4.200C11.800 4.200 10.800 4.700 10 5.500z" fill="#cfe2f5"/><path d="M12.500 12c1.500-1.500 3.500-1.200 4.500.8.800 1.700-.5 3.500-2 3.800-1.500.300-2.300-1-2.500-2.200z" fill="#2a1a10"/></svg>
<div class="a" style="left:1099px;top:1072px;width:6px;height:3px;border-radius:2px;background:#6b7a7c"></div>
<div class="a" style="left:1127px;top:1037px;width:38px;height:38px;border-radius:5px;background:#e6f6f7"></div>
<svg class="a" style="left:1134px;top:1044px" width="24" height="24" viewBox="0 0 24 24"><circle cx="12" cy="12" r="12" fill="#1ea446"/><path d="M1.910 5.520A12 12 0 0 1 22.660 6.500L12 6.500A5.500 5.500 0 0 0 7.240 14.750z" fill="#e94235"/><path d="M22.660 6.500A12 12 0 0 1 11.430 23.980L16.760 14.750A5.500 5.500 0 0 0 12 6.500z" fill="#fbc116"/><circle cx="12" cy="12" r="5.600" fill="#fff"/><circle cx="12" cy="12" r="4.500" fill="#3e82f1"/></svg>
<div class="a" style="left:1138px;top:1072px;width:16px;height:3px;border-radius:2px;background:#1d7a8a"></div>
<svg class="a" style="left:1178px;top:1044px" width="24" height="24" viewBox="0 0 24 24"><defs><linearGradient id="ffg" x1=".8" y1="0" x2=".2" y2="1"><stop offset="0" stop-color="#ffe14a"/><stop offset=".45" stop-color="#ff8a1e"/><stop offset="1" stop-color="#f0306a"/></linearGradient><radialGradient id="ffp" cx=".5" cy=".35" r=".7"><stop offset="0" stop-color="#9f62f2"/><stop offset="1" stop-color="#5a2bd0"/></radialGradient></defs><path d="M12.500 24A11 11 0 0 1 1.500 13C1.500 9.500 3 6.800 4.300 5.500L4.800 8C6 5.500 8.500 4 10.800 3.600 13.500 3.200 15 1.500 15.300 0 19.500 2 23 6.500 23 13A11 11 0 0 1 12.500 24z" fill="url(#ffg)"/><circle cx="12.800" cy="13" r="5.300" fill="url(#ffp)"/><path d="M3 11.500c2-1 4.500-1.500 6.500-.5 1.500.8 1.500 2.500.3 3-1 .5-2.500.2-3.300.8 1.500 2 4.500 3.200 7.500 2.300 3-1 4.500-3.500 4.500-6.500 0-2-1-4-2.500-5.500 2.500 1 4.500 4 4.300 8C20 19 16.500 22 12.500 22 7 22 3 17.500 3 11.500z" fill="#ff7b1e" opacity=".9"/></svg>
<svg class="a" style="left:1222px;top:1044px" width="26" height="26" viewBox="0 0 26 26"><circle cx="11.500" cy="12" r="11.300" fill="#7a12d8"/><path d="M3.500 12c0-2.500 1.800-4 4-4 2.300 0 3 2 4 2s1.700-2 4-2c2.200 0 4 1.500 4 4s-1.800 4-4 4c-2.300 0-3-2-4-2s-1.700 2-4 2c-2.200 0-4-1.500-4-4z" fill="#fff"/><circle cx="7.800" cy="11.500" r="1.500" fill="#7a12d8"/><circle cx="15.200" cy="11.500" r="1.500" fill="#7a12d8"/><circle cx="20" cy="20" r="5" fill="#ff7a1a"/><circle cx="20.300" cy="20.300" r="2.600" fill="#7c4ae0"/><path d="M15.500 19c1-2 3-3 5-2.500" stroke="#ffb43a" stroke-width="1.300" fill="none"/></svg>
<!-- tray -->
<svg class="a" style="left:1688px;top:1051px" width="14" height="10"><path d="M1.500 8l5.500-5.500L12.500 8" stroke="#1a1a1a" stroke-width="1.300" fill="none"/></svg>
<svg class="a" style="left:1710px;top:1050px" width="18" height="15" viewBox="0 0 18 15"><path d="M4 12a3.500 3.500 0 0 1-.3-7A5 5 0 0 1 13 4a3.500 3.500 0 0 1 1 7z" fill="#8e8e8e" stroke="#555" stroke-width=".8"/><circle cx="12.500" cy="10.500" r="4.300" fill="#1d6fd8"/><path d="M12.500 9v4M12.500 7.300v.4" stroke="#fff" stroke-width="1.300"/></svg>
<div class="t" style="left:1741.5px;top:1051.5px;font-size:11px;color:#1a1a1a;letter-spacing:.1px">ENG</div>
<svg class="a" style="left:1782px;top:1049px" width="18" height="14" viewBox="0 0 18 14"><path d="M1 5a11.500 11.500 0 0 1 16 0M3.500 7.700a8 8 0 0 1 11 0M6 10.300a4.500 4.500 0 0 1 6 0" stroke="#1a1a1a" stroke-width="1.200" fill="none"/><circle cx="9" cy="12.300" r="1.100" fill="#1a1a1a"/></svg>
<svg class="a" style="left:1806px;top:1048px" width="18" height="16" viewBox="0 0 18 16"><path d="M1 5.500h3l4-3.500v12l-4-3.500H1z" stroke="#1a1a1a" stroke-width="1.100" fill="none" stroke-linejoin="round"/><path d="M10.500 5.500a3.500 3.500 0 0 1 0 5M12.800 3.500a6.500 6.500 0 0 1 0 9M15 1.500a9.500 9.500 0 0 1 0 13" stroke="#1a1a1a" stroke-width="1.100" fill="none"/></svg>
<div class="t" style="left:1838px;top:1043px;width:62px;text-align:right;font-size:11.5px;color:#1a1a1a">11:13</div>
<div class="t" style="left:1836px;top:1059px;width:64px;text-align:right;font-size:11.5px;color:#1a1a1a;letter-spacing:.3px">24-02-2024</div>
</body></html>
